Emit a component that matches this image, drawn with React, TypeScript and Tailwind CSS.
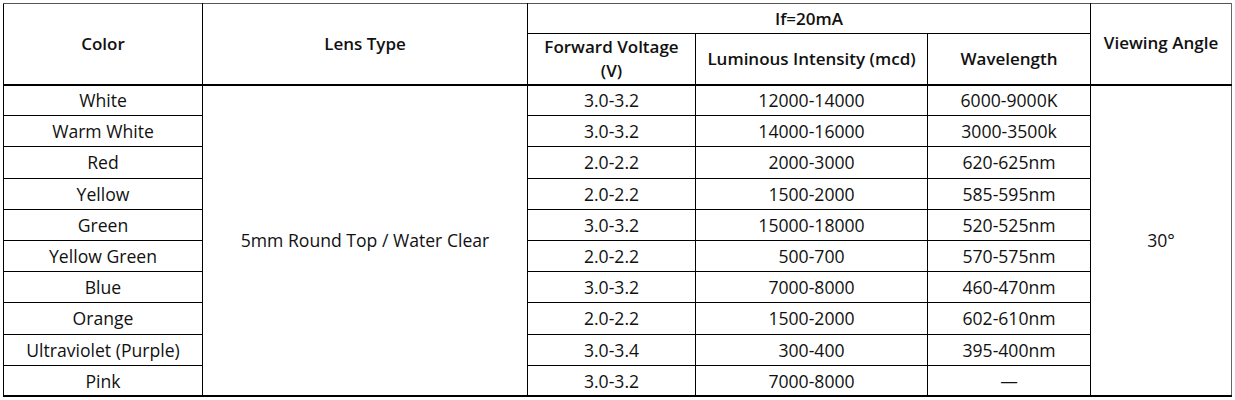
import React from "react";

const rows: [string, string, string, string][] = [
  ["White", "3.0-3.2", "12000-14000", "6000-9000K"],
  ["Warm White", "3.0-3.2", "14000-16000", "3000-3500k"],
  ["Red", "2.0-2.2", "2000-3000", "620-625nm"],
  ["Yellow", "2.0-2.2", "1500-2000", "585-595nm"],
  ["Green", "3.0-3.2", "15000-18000", "520-525nm"],
  ["Yellow Green", "2.0-2.2", "500-700", "570-575nm"],
  ["Blue", "3.0-3.2", "7000-8000", "460-470nm"],
  ["Orange", "2.0-2.2", "1500-2000", "602-610nm"],
  ["Ultraviolet (Purple)", "3.0-3.4", "300-400", "395-400nm"],
  ["Pink", "3.0-3.2", "7000-8000", "—"],
];

export default function App() {
  const cell = "border border-black text-center align-middle p-0";
  const hcell = `${cell} font-semibold text-[17px]`;
  return (
    <div className="w-[1235px] h-[400px] bg-white pt-[3px] pl-[3px] text-[#111]" style={{ fontFamily: '"Open Sans", "Noto Sans", sans-serif' }}>
      <table className="table-fixed border-collapse w-[1228px] text-[17.6px] leading-[22px]">
        <colgroup>
          <col className="w-[199px]" />
          <col className="w-[325px]" />
          <col className="w-[168px]" />
          <col className="w-[232px]" />
          <col className="w-[163px]" />
          <col className="w-[141px]" />
        </colgroup>
        <thead>
          <tr className="h-[30px]">
            <th rowSpan={2} className={`${hcell} border-t-[#555] border-b-2`}>Color</th>
            <th rowSpan={2} className={`${hcell} border-t-[#555] border-b-2`}>Lens Type</th>
            <th colSpan={3} className={`${hcell} border-t-[#555]`}>If=20mA</th>
            <th rowSpan={2} className={`${hcell} border-t-[#555] border-r-[#666] border-b-2 pb-[2px]`}>Viewing Angle</th>
          </tr>
          <tr className="h-[51px]">
            <th className={`${hcell} border-b-2 leading-[24px]`}>Forward Voltage<br />(V)</th>
            <th className={`${hcell} border-b-2`}>Luminous Intensity (mcd)</th>
            <th className={`${hcell} border-b-2`}>Wavelength</th>
          </tr>
        </thead>
        <tbody>
          {rows.map((r, i) => (
            <tr key={i} className="h-[31.2px]">
              <td className={`${cell} ${i === rows.length - 1 ? "border-b-2" : ""}`}>{r[0]}</td>
              {i === 0 && (
                <td rowSpan={10} className={`${cell} border-b-2`}>5mm Round Top / Water Clear</td>
              )}
              <td className={`${cell} ${i === rows.length - 1 ? "border-b-2" : ""}`}>{r[1]}</td>
              <td className={`${cell} ${i === rows.length - 1 ? "border-b-2" : ""}`}>{r[2]}</td>
              <td className={`${cell} ${i === rows.length - 1 ? "border-b-2" : ""}`}>{r[3]}</td>
              {i === 0 && (
                <td rowSpan={10} className={`${cell} border-b-2 border-r-[#666]`}>30°</td>
              )}
            </tr>
          ))}
        </tbody>
      </table>
    </div>
  );
}
